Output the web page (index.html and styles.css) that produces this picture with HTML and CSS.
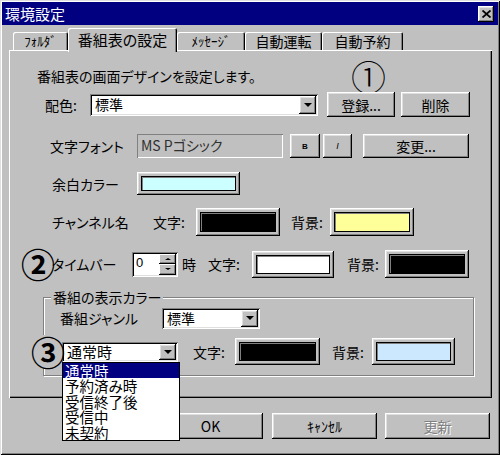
FILE: index.html
```html
<!DOCTYPE html>
<html lang="ja">
<head>
    <meta charset="UTF-8">
    <title>環境設定</title>
    <link rel="stylesheet" href="styles.css">
</head>
<body>
    <div class="window">
        <div class="titlebar">
            <span class="title">環境設定</span>
            <span class="close">
                <svg width="9" height="8" viewBox="0 0 9 8"><path d="M0.5 0.5 L8.5 7.5 M8.5 0.5 L0.5 7.5" stroke="#000" stroke-width="1.8" fill="none"/></svg>
            </span>
        </div>

        <div class="tabs">
            <div class="tab tab-folder">ﾌｫﾙﾀﾞ</div>
            <div class="tab active">番組表の設定</div>
            <div class="tab tab-message">ﾒｯｾｰｼﾞ</div>
            <div class="tab tab-auto">自動運転</div>
            <div class="tab tab-reserve">自動予約</div>
        </div>

        <div class="panel">
            <div class="row row-desc">
                <span class="desc">番組表の画面デザインを設定します。</span>
                <span class="mark mark-thin">①</span>
            </div>

            <div class="row row-scheme">
                <span class="lbl lbl-scheme">配色:</span>
                <span class="combo combo-scheme">
                    <span class="combo-text">標準</span>
                    <span class="combo-btn"><i class="arrow-down"></i></span>
                </span>
                <span class="btn btn-register">登録...</span>
                <span class="btn btn-delete">削除</span>
            </div>

            <div class="row row-font">
                <span class="lbl lbl-font">文字フォント</span>
                <span class="field-disabled">MS Pゴシック</span>
                <span class="btn btn-bold">B</span>
                <span class="btn btn-italic">I</span>
                <span class="btn btn-change">変更...</span>
            </div>

            <div class="row row-margin">
                <span class="lbl lbl-margin">余白カラー</span>
                <span class="swatch swatch-margin"><span class="fill fill-cyan"></span></span>
            </div>

            <div class="row row-channel">
                <span class="lbl lbl-channel">チャンネル名</span>
                <span class="lbl lbl-fg">文字:</span>
                <span class="swatch swatch-md"><span class="fill fill-black"></span></span>
                <span class="lbl lbl-bg">背景:</span>
                <span class="swatch swatch-md"><span class="fill fill-yellow"></span></span>
            </div>

            <div class="row row-time">
                <span class="mark mark-bold mark-2">②</span>
                <span class="lbl lbl-time">タイムバー</span>
                <span class="spin">
                    <span class="spin-text">0</span>
                    <span class="spin-btns">
                        <span class="spin-btn"><i class="arrow-up small"></i></span>
                        <span class="spin-btn"><i class="arrow-down small"></i></span>
                    </span>
                </span>
                <span class="lbl lbl-hour">時</span>
                <span class="lbl lbl-fg2">文字:</span>
                <span class="swatch swatch-time"><span class="fill fill-white"></span></span>
                <span class="lbl lbl-bg2">背景:</span>
                <span class="swatch swatch-md"><span class="fill fill-black"></span></span>
            </div>

            <fieldset class="group">
                <legend>番組の表示カラー</legend>
                <div class="row row-genre">
                    <span class="lbl lbl-genre">番組ジャンル</span>
                    <span class="combo combo-genre">
                        <span class="combo-text">標準</span>
                        <span class="combo-btn"><i class="arrow-down"></i></span>
                    </span>
                </div>
                <div class="row row-state">
                    <span class="mark mark-bold mark-3">③</span>
                    <span class="combo combo-state">
                        <span class="combo-text">通常時</span>
                        <span class="combo-btn"><i class="arrow-down"></i></span>
                        <ul class="droplist">
                            <li class="selected">通常時</li>
                            <li>予約済み時</li>
                            <li>受信終了後</li>
                            <li>受信中</li>
                            <li>未契約</li>
                        </ul>
                    </span>
                    <span class="lbl lbl-fg3">文字:</span>
                    <span class="swatch swatch-state"><span class="fill fill-black"></span></span>
                    <span class="lbl lbl-bg3">背景:</span>
                    <span class="swatch swatch-state2"><span class="fill fill-blue"></span></span>
                </div>
            </fieldset>
        </div>

        <div class="buttons">
            <span class="btn btn-foot">OK</span>
            <span class="btn btn-foot">ｷｬﾝｾﾙ</span>
            <span class="btn btn-foot disabled">更新</span>
        </div>
    </div>
</body>
</html>
```

FILE: styles.css
```css
* {
    box-sizing: border-box;
}
body {
    margin: 0;
    font-family: "Noto Sans CJK JP", "Noto Sans", sans-serif;
    font-size: 14px;
    font-feature-settings: "palt";
    color: #000;
    background: #c0c0c0;
}
.window {
    width: 500px;
    height: 455px;
    padding: 2px;
    background: #c0c0c0;
    box-shadow: inset 1px 1px #dfdfdf, inset -1px -1px #000, inset 2px 2px #fff, inset -2px -2px #808080;
}

/* title bar */
.titlebar {
    height: 23px;
    background: #000080;
    color: #fff;
    display: flex;
    align-items: center;
    justify-content: space-between;
    padding: 0 4px 0 3px;
}
.title {
    font-size: 15px;
    line-height: 23px;
}
.close {
    width: 16px;
    height: 16px;
    display: flex;
    align-items: center;
    justify-content: center;
    background: #c0c0c0;
    box-shadow: inset -1px -1px #000, inset 1px 1px #fff, inset -2px -2px #808080, inset 2px 2px #dfdfdf;
}

/* tabs */
.tabs {
    display: flex;
    align-items: flex-end;
    height: 25px;
    padding-left: 11px;
    position: relative;
    z-index: 1;
}
.tab {
    height: 18px;
    line-height: 18px;
    text-align: center;
    font-size: 14px;
    background: #c0c0c0;
    border-radius: 2px 2px 0 0;
    box-shadow: inset 1px 1px #fff, inset -1px 0 #000, inset -2px 0 #808080;
}
.tab-folder {
    width: 55px;
    font-size: 13px;
}
.tab-message {
    width: 68px;
    font-size: 13px;
}
.tab-auto {
    width: 77px;
}
.tab-reserve {
    width: 81px;
}
.tab.active {
    width: 109px;
    height: 24px;
    line-height: 24px;
    margin-bottom: -2px;
    font-size: 15px;
}

/* panel */
.panel {
    margin: 0 6px 0 7px;
    height: 348px;
    padding-top: 12px;
    box-shadow: inset 1px 1px #fff, inset -1px -1px #000, inset -2px -2px #808080;
}
.row {
    display: flex;
    align-items: center;
}
.lbl {
    white-space: nowrap;
    flex-shrink: 0;
}
.mark {
    line-height: 1;
    flex-shrink: 0;
}
.mark-thin {
    font-size: 35px;
    font-weight: 300;
    margin-left: -1px;
    margin-top: -3px;
}
.mark-bold {
    font-size: 34px;
    font-weight: 700;
    background: #c0c0c0;
    position: relative;
    z-index: 1;
}

.row-desc {
    height: 30px;
    padding-left: 28px;
}
.desc {
    width: 315px;
    margin-top: -2px;
}

.row-scheme {
    height: 25px;
    padding-left: 36px;
}
.lbl-scheme {
    width: 45px;
}
.combo-scheme {
    width: 228px;
    height: 22px;
}
.btn-register {
    width: 68px;
    height: 25px;
    margin-left: 9px;
}
.btn-delete {
    width: 69px;
    height: 25px;
    margin-left: 6px;
}

.row-font {
    height: 24px;
    margin-top: 17px;
    padding-left: 41px;
}
.lbl-font {
    width: 87px;
}
.field-disabled {
    width: 146px;
    height: 24px;
    line-height: 22px;
    padding-left: 4px;
    color: #303030;
    background: #c0c0c0;
    box-shadow: inset 1px 1px #808080, inset -1px -1px #fff;
}
.btn-bold {
    width: 30px;
    height: 24px;
    margin-left: 7px;
    font-size: 8px;
    font-weight: 700;
    font-family: "Liberation Sans", sans-serif;
}
.btn-italic {
    width: 29px;
    height: 24px;
    margin-left: 3px;
    font-size: 9px;
    font-style: italic;
    font-family: "Liberation Sans", sans-serif;
}
.btn-change {
    width: 106px;
    height: 24px;
    margin-left: 11px;
}

.row-margin {
    height: 23px;
    margin-top: 14px;
    padding-left: 43px;
}
.lbl-margin {
    width: 85px;
}
.swatch-margin {
    width: 103px;
    height: 23px;
    padding: 3px 3px 3px 4px;
}

.row-channel {
    height: 28px;
    margin-top: 13px;
    padding-left: 43px;
}
.lbl-channel {
    width: 101px;
}
.lbl-fg {
    width: 43px;
}
.lbl-bg {
    width: 39px;
    margin-left: 11px;
}
.swatch-md {
    width: 84px;
    height: 28px;
}

.row-time {
    height: 28px;
    margin-top: 14px;
    padding-left: 12px;
}
.mark-2 {
    width: 30px;
}
.lbl-time {
    width: 80px;
    margin-left: 1px;
}
.lbl-hour {
    width: 26px;
    margin-left: 4px;
}
.lbl-fg2 {
    width: 44px;
}
.swatch-time {
    width: 82px;
    height: 27px;
}
.lbl-bg2 {
    width: 38px;
    margin-left: 13px;
}

/* group box */
.group {
    margin: 12px 18px 0 34px;
    height: 86px;
    padding: 0;
    border: 1px solid #808080;
    box-shadow: 1px 1px 0 #fff, inset 1px 1px 0 #fff;
    min-inline-size: 0;
}
.group legend {
    margin-left: 7px;
    padding: 0 2px;
    line-height: 14px;
    background: #c0c0c0;
}
.row-genre {
    height: 22px;
    margin-top: 3px;
    padding-left: 16px;
}
.lbl-genre {
    width: 102px;
}
.combo-genre {
    width: 98px;
    height: 21px;
}
.row-state {
    height: 27px;
    margin-top: 9px;
}
.mark-3 {
    width: 29px;
    margin-left: -13px;
}
.combo-state {
    width: 116px;
    height: 20px;
    margin-left: 2px;
    font-size: 15px;
    position: relative;
}
.lbl-fg3 {
    width: 42px;
    margin-left: 15px;
}
.swatch-state {
    width: 85px;
    height: 27px;
}
.lbl-bg3 {
    width: 40px;
    margin-left: 12px;
}
.swatch-state2 {
    width: 83px;
    height: 27px;
}

/* controls */
.btn {
    display: flex;
    align-items: center;
    justify-content: center;
    flex-shrink: 0;
    background: #c0c0c0;
    box-shadow: inset -1px -1px #000, inset 1px 1px #fff, inset -2px -2px #808080, inset 2px 2px #dfdfdf;
}
.btn.disabled {
    color: #808080;
    text-shadow: 1px 1px #fff;
}
.combo {
    display: flex;
    align-items: stretch;
    flex-shrink: 0;
    padding: 2px;
    background: #fff;
    box-shadow: inset 1px 1px #808080, inset -1px -1px #fff, inset 2px 2px #000, inset -2px -2px #dfdfdf;
}
.combo-text {
    flex: 1;
    padding-left: 3px;
    line-height: 16px;
    white-space: nowrap;
}
.combo-btn {
    width: 17px;
    display: flex;
    align-items: center;
    justify-content: center;
    background: #c0c0c0;
    box-shadow: inset -1px -1px #000, inset 1px 1px #fff, inset -2px -2px #808080, inset 2px 2px #dfdfdf;
}
.arrow-down, .arrow-up {
    width: 0;
    height: 0;
    border-left: 4px solid transparent;
    border-right: 4px solid transparent;
}
.arrow-down {
    border-top: 4px solid #000;
}
.arrow-up {
    border-bottom: 4px solid #000;
}
.arrow-down.small, .arrow-up.small {
    border-left-width: 3px;
    border-right-width: 3px;
    border-top-width: 2px;
    border-bottom-width: 2px;
}

.droplist {
    position: absolute;
    top: 100%;
    left: 0;
    width: 118px;
    margin: 0;
    padding: 0;
    list-style: none;
    font-size: 14.5px;
    background: #fff;
    border: 1px solid #000;
    z-index: 5;
}
.droplist li {
    height: 15.5px;
    line-height: 15.5px;
    padding-left: 2px;
    white-space: nowrap;
}
.droplist li.selected {
    background: #000080;
    color: #fff;
}

.spin {
    display: flex;
    width: 46px;
    height: 25px;
    padding: 2px;
    background: #fff;
    box-shadow: inset 1px 1px #808080, inset -1px -1px #fff, inset 2px 2px #000, inset -2px -2px #dfdfdf;
}
.spin-text {
    flex: 1;
    padding-left: 2px;
    line-height: 18px;
    font-size: 13px;
    font-family: "Liberation Sans", sans-serif;
}
.spin-btns {
    width: 17px;
    display: flex;
    flex-direction: column;
}
.spin-btn {
    flex: 1;
    display: flex;
    align-items: center;
    justify-content: center;
    background: #c0c0c0;
    box-shadow: inset -1px -1px #000, inset 1px 1px #fff, inset -2px -2px #808080;
}

.swatch {
    display: flex;
    flex-shrink: 0;
    padding: 4px;
    background: #c0c0c0;
    box-shadow: inset -1px -1px #000, inset 1px 1px #fff, inset -2px -2px #808080, inset 2px 2px #dfdfdf;
}
.fill {
    flex: 1;
    border: 1px solid #000;
    box-shadow: inset 1px 1px #808080;
}
.fill-cyan { background: #ccffff; }
.fill-black { background: #000; }
.fill-yellow { background: #ffff99; }
.fill-white { background: #fff; }
.fill-blue { background: #cce8ff; }

/* bottom buttons */
.buttons {
    display: flex;
    margin-top: 15px;
    padding-left: 156px;
    gap: 9px;
}
.btn-foot {
    width: 105px;
    height: 26px;
}
.btn-foot + .btn-foot + .btn-foot {
    margin-left: -1px;
}
```
